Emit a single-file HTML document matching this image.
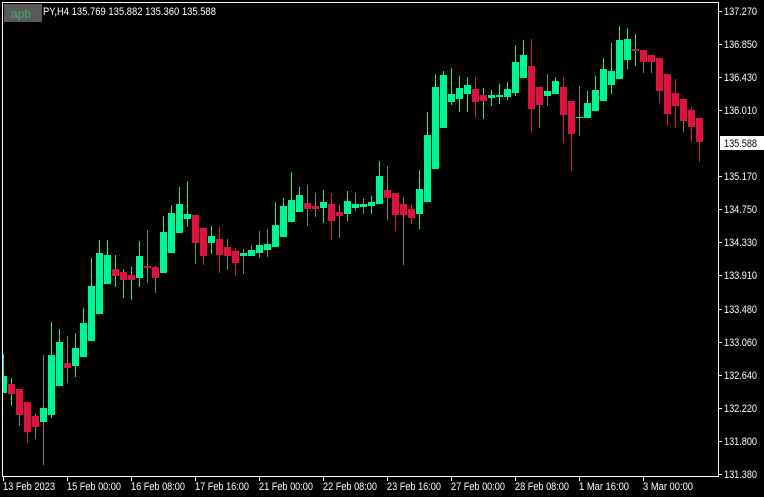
<!DOCTYPE html>
<html><head><meta charset="utf-8"><style>
html,body{margin:0;padding:0;background:#000;width:764px;height:497px;overflow:hidden}
svg{display:block}
text{font-family:"Liberation Sans",sans-serif;font-size:11px;fill:#fff}
</style></head><body>
<svg width="764" height="497" xmlns="http://www.w3.org/2000/svg">
<rect width="764" height="497" fill="#000"/>
<defs><clipPath id="c"><rect x="3" y="3" width="715" height="473"/></clipPath></defs>
<g clip-path="url(#c)">
<rect x="3" y="354" width="1" height="39" fill="#00f593"/><rect x="0" y="376" width="7" height="17" fill="#00f593"/>
<rect x="11" y="378" width="1" height="28" fill="#00f593"/><rect x="8" y="384" width="7" height="10" fill="#dc143c"/>
<rect x="19" y="389" width="1" height="37" fill="#808080"/><rect x="16" y="389" width="7" height="26" fill="#dc143c"/>
<rect x="27" y="402" width="1" height="41" fill="#dc143c"/><rect x="24" y="402" width="7" height="30" fill="#dc143c"/>
<rect x="35" y="414" width="1" height="25" fill="#808080"/><rect x="32" y="416" width="7" height="11" fill="#dc143c"/>
<rect x="43" y="355" width="1" height="110" fill="#808080"/><rect x="40" y="408" width="7" height="14" fill="#00f593"/>
<rect x="51" y="322" width="1" height="96" fill="#00f593"/><rect x="48" y="355" width="7" height="60" fill="#00f593"/>
<rect x="59" y="329" width="1" height="57" fill="#00f593"/><rect x="56" y="342" width="7" height="44" fill="#00f593"/>
<rect x="67" y="336" width="1" height="47" fill="#808080"/><rect x="64" y="363" width="7" height="5" fill="#dc143c"/>
<rect x="75" y="333" width="1" height="44" fill="#00f593"/><rect x="72" y="348" width="7" height="18" fill="#00f593"/>
<rect x="83" y="308" width="1" height="49" fill="#00f593"/><rect x="80" y="323" width="7" height="34" fill="#00f593"/>
<rect x="91" y="258" width="1" height="83" fill="#00f593"/><rect x="88" y="286" width="7" height="55" fill="#00f593"/>
<rect x="99" y="240" width="1" height="74" fill="#00f593"/><rect x="96" y="253" width="7" height="61" fill="#00f593"/>
<rect x="107" y="240" width="1" height="44" fill="#00f593"/><rect x="104" y="255" width="7" height="29" fill="#00f593"/>
<rect x="115" y="255" width="1" height="32" fill="#00f593"/><rect x="112" y="269" width="7" height="7" fill="#dc143c"/>
<rect x="123" y="269" width="1" height="29" fill="#00f593"/><rect x="120" y="272" width="7" height="8" fill="#dc143c"/>
<rect x="131" y="267" width="1" height="33" fill="#00f593"/><rect x="128" y="275" width="7" height="5" fill="#dc143c"/>
<rect x="139" y="241" width="1" height="46" fill="#00f593"/><rect x="136" y="256" width="7" height="22" fill="#00f593"/>
<rect x="147" y="230" width="1" height="53" fill="#808080"/><rect x="144" y="266" width="7" height="2" fill="#dc143c"/>
<rect x="155" y="266" width="1" height="27" fill="#808080"/><rect x="152" y="267" width="7" height="11" fill="#dc143c"/>
<rect x="163" y="216" width="1" height="57" fill="#00f593"/><rect x="160" y="232" width="7" height="41" fill="#00f593"/>
<rect x="171" y="205" width="1" height="48" fill="#00f593"/><rect x="168" y="213" width="7" height="40" fill="#00f593"/>
<rect x="179" y="187" width="1" height="46" fill="#00f593"/><rect x="176" y="204" width="7" height="29" fill="#00f593"/>
<rect x="187" y="181" width="1" height="46" fill="#00f593"/><rect x="184" y="214" width="7" height="5" fill="#00f593"/>
<rect x="195" y="215" width="1" height="49" fill="#808080"/><rect x="192" y="215" width="7" height="28" fill="#dc143c"/>
<rect x="203" y="228" width="1" height="37" fill="#dc143c"/><rect x="200" y="228" width="7" height="28" fill="#dc143c"/>
<rect x="211" y="226" width="1" height="28" fill="#00f593"/><rect x="208" y="236" width="7" height="7" fill="#00f593"/>
<rect x="219" y="226" width="1" height="47" fill="#dc143c"/><rect x="216" y="239" width="7" height="16" fill="#dc143c"/>
<rect x="227" y="239" width="1" height="31" fill="#808080"/><rect x="224" y="247" width="7" height="9" fill="#dc143c"/>
<rect x="235" y="248" width="1" height="28" fill="#dc143c"/><rect x="232" y="251" width="7" height="12" fill="#dc143c"/>
<rect x="243" y="249" width="1" height="25" fill="#808080"/><rect x="240" y="253" width="7" height="3" fill="#00f593"/>
<rect x="251" y="245" width="1" height="11" fill="#808080"/><rect x="248" y="250" width="7" height="6" fill="#00f593"/>
<rect x="259" y="231" width="1" height="27" fill="#808080"/><rect x="256" y="245" width="7" height="8" fill="#00f593"/>
<rect x="267" y="229" width="1" height="28" fill="#808080"/><rect x="264" y="244" width="7" height="6" fill="#00f593"/>
<rect x="275" y="202" width="1" height="45" fill="#00f593"/><rect x="272" y="225" width="7" height="22" fill="#00f593"/>
<rect x="283" y="198" width="1" height="39" fill="#00f593"/><rect x="280" y="206" width="7" height="31" fill="#00f593"/>
<rect x="291" y="172" width="1" height="50" fill="#00f593"/><rect x="288" y="200" width="7" height="22" fill="#00f593"/>
<rect x="299" y="187" width="1" height="25" fill="#00f593"/><rect x="296" y="195" width="7" height="17" fill="#00f593"/>
<rect x="307" y="185" width="1" height="41" fill="#808080"/><rect x="304" y="203" width="7" height="6" fill="#dc143c"/>
<rect x="315" y="193" width="1" height="24" fill="#808080"/><rect x="312" y="206" width="7" height="3" fill="#dc143c"/>
<rect x="323" y="190" width="1" height="33" fill="#00f593"/><rect x="320" y="202" width="7" height="6" fill="#00f593"/>
<rect x="331" y="193" width="1" height="47" fill="#dc143c"/><rect x="328" y="204" width="7" height="17" fill="#dc143c"/>
<rect x="339" y="205" width="1" height="33" fill="#808080"/><rect x="336" y="212" width="7" height="4" fill="#dc143c"/>
<rect x="347" y="191" width="1" height="30" fill="#00f593"/><rect x="344" y="201" width="7" height="13" fill="#00f593"/>
<rect x="355" y="193" width="1" height="18" fill="#808080"/><rect x="352" y="204" width="7" height="4" fill="#00f593"/>
<rect x="363" y="198" width="1" height="16" fill="#808080"/><rect x="360" y="204" width="7" height="3" fill="#00f593"/>
<rect x="371" y="196" width="1" height="18" fill="#00f593"/><rect x="368" y="202" width="7" height="4" fill="#00f593"/>
<rect x="379" y="161" width="1" height="43" fill="#00f593"/><rect x="376" y="176" width="7" height="28" fill="#00f593"/>
<rect x="387" y="166" width="1" height="54" fill="#808080"/><rect x="384" y="190" width="7" height="8" fill="#dc143c"/>
<rect x="395" y="193" width="1" height="38" fill="#dc143c"/><rect x="392" y="193" width="7" height="22" fill="#dc143c"/>
<rect x="403" y="197" width="1" height="68" fill="#808080"/><rect x="400" y="204" width="7" height="11" fill="#dc143c"/>
<rect x="411" y="204" width="1" height="20" fill="#dc143c"/><rect x="408" y="209" width="7" height="9" fill="#dc143c"/>
<rect x="419" y="170" width="1" height="59" fill="#00f593"/><rect x="416" y="189" width="7" height="25" fill="#00f593"/>
<rect x="427" y="112" width="1" height="90" fill="#00f593"/><rect x="424" y="135" width="7" height="67" fill="#00f593"/>
<rect x="435" y="74" width="1" height="95" fill="#00f593"/><rect x="432" y="87" width="7" height="82" fill="#00f593"/>
<rect x="443" y="71" width="1" height="57" fill="#00f593"/><rect x="440" y="75" width="7" height="53" fill="#00f593"/>
<rect x="451" y="68" width="1" height="37" fill="#00f593"/><rect x="448" y="94" width="7" height="8" fill="#00f593"/>
<rect x="459" y="76" width="1" height="36" fill="#00f593"/><rect x="456" y="88" width="7" height="11" fill="#00f593"/>
<rect x="467" y="77" width="1" height="35" fill="#00f593"/><rect x="464" y="85" width="7" height="9" fill="#00f593"/>
<rect x="475" y="77" width="1" height="41" fill="#dc143c"/><rect x="472" y="89" width="7" height="13" fill="#dc143c"/>
<rect x="483" y="88" width="1" height="31" fill="#00f593"/><rect x="480" y="95" width="7" height="6" fill="#dc143c"/>
<rect x="491" y="90" width="1" height="16" fill="#00f593"/><rect x="488" y="95" width="7" height="3" fill="#00f593"/>
<rect x="499" y="84" width="1" height="20" fill="#00f593"/><rect x="496" y="95" width="7" height="2" fill="#00f593"/>
<rect x="507" y="82" width="1" height="18" fill="#00f593"/><rect x="504" y="89" width="7" height="8" fill="#00f593"/>
<rect x="515" y="45" width="1" height="51" fill="#00f593"/><rect x="512" y="62" width="7" height="31" fill="#00f593"/>
<rect x="523" y="40" width="1" height="38" fill="#00f593"/><rect x="520" y="55" width="7" height="23" fill="#00f593"/>
<rect x="531" y="39" width="1" height="94" fill="#dc143c"/><rect x="528" y="66" width="7" height="43" fill="#dc143c"/>
<rect x="539" y="87" width="1" height="41" fill="#808080"/><rect x="536" y="87" width="7" height="18" fill="#dc143c"/>
<rect x="547" y="74" width="1" height="32" fill="#808080"/><rect x="544" y="91" width="7" height="5" fill="#00f593"/>
<rect x="555" y="77" width="1" height="17" fill="#00f593"/><rect x="552" y="81" width="7" height="13" fill="#00f593"/>
<rect x="563" y="77" width="1" height="66" fill="#dc143c"/><rect x="560" y="87" width="7" height="28" fill="#dc143c"/>
<rect x="571" y="101" width="1" height="70" fill="#dc143c"/><rect x="568" y="101" width="7" height="33" fill="#dc143c"/>
<rect x="579" y="86" width="1" height="50" fill="#808080"/><rect x="576" y="117" width="7" height="1" fill="#00f593"/>
<rect x="587" y="91" width="1" height="27" fill="#00f593"/><rect x="584" y="103" width="7" height="15" fill="#00f593"/>
<rect x="595" y="76" width="1" height="35" fill="#00f593"/><rect x="592" y="90" width="7" height="21" fill="#00f593"/>
<rect x="603" y="58" width="1" height="43" fill="#00f593"/><rect x="600" y="69" width="7" height="32" fill="#00f593"/>
<rect x="611" y="43" width="1" height="51" fill="#00f593"/><rect x="608" y="71" width="7" height="14" fill="#00f593"/>
<rect x="619" y="26" width="1" height="53" fill="#00f593"/><rect x="616" y="40" width="7" height="39" fill="#00f593"/>
<rect x="627" y="28" width="1" height="41" fill="#00f593"/><rect x="624" y="39" width="7" height="21" fill="#00f593"/>
<rect x="635" y="34" width="1" height="32" fill="#00f593"/><rect x="632" y="49" width="7" height="2" fill="#dc143c"/>
<rect x="643" y="50" width="1" height="23" fill="#808080"/><rect x="640" y="50" width="7" height="12" fill="#dc143c"/>
<rect x="651" y="55" width="1" height="18" fill="#808080"/><rect x="648" y="55" width="7" height="7" fill="#dc143c"/>
<rect x="659" y="58" width="1" height="45" fill="#dc143c"/><rect x="656" y="58" width="7" height="33" fill="#dc143c"/>
<rect x="667" y="74" width="1" height="52" fill="#dc143c"/><rect x="664" y="74" width="7" height="40" fill="#dc143c"/>
<rect x="675" y="79" width="1" height="49" fill="#dc143c"/><rect x="672" y="93" width="7" height="13" fill="#dc143c"/>
<rect x="683" y="99" width="1" height="33" fill="#808080"/><rect x="680" y="99" width="7" height="22" fill="#dc143c"/>
<rect x="691" y="107" width="1" height="35" fill="#dc143c"/><rect x="688" y="110" width="7" height="17" fill="#dc143c"/>
<rect x="699" y="118" width="1" height="44" fill="#dc143c"/><rect x="696" y="118" width="7" height="24" fill="#dc143c"/>
</g>
<rect x="2" y="2" width="1" height="475" fill="#fff"/>
<rect x="2" y="2" width="717" height="1" fill="#fff"/>
<rect x="718" y="2" width="1" height="475" fill="#fff"/>
<rect x="2" y="476" width="717" height="1" fill="#fff"/>
<rect x="4" y="4" width="38" height="18" fill="#5a5a5a"/>
<text x="11" y="18" style="fill:#3cb371;font-size:12px">apb</text>
<text x="43" y="15" textLength="173" lengthAdjust="spacingAndGlyphs">PY,H4  135.769 135.882 135.360 135.588</text>
<g fill="#fff">
<rect x="718" y="11" width="4" height="1"/><rect x="718" y="44" width="4" height="1"/><rect x="718" y="77" width="4" height="1"/><rect x="718" y="110" width="4" height="1"/><rect x="718" y="176" width="4" height="1"/><rect x="718" y="209" width="4" height="1"/><rect x="718" y="242" width="4" height="1"/><rect x="718" y="275" width="4" height="1"/><rect x="718" y="309" width="4" height="1"/><rect x="718" y="342" width="4" height="1"/><rect x="718" y="375" width="4" height="1"/><rect x="718" y="408" width="4" height="1"/><rect x="718" y="441" width="4" height="1"/><rect x="718" y="474" width="4" height="1"/>
</g>
<g>
<text x="724" y="15" textLength="33" lengthAdjust="spacingAndGlyphs">137.270</text>
<text x="724" y="48" textLength="33" lengthAdjust="spacingAndGlyphs">136.850</text>
<text x="724" y="81" textLength="33" lengthAdjust="spacingAndGlyphs">136.430</text>
<text x="724" y="114" textLength="33" lengthAdjust="spacingAndGlyphs">136.010</text>
<rect x="720" y="136" width="44" height="14" fill="#fff"/>
<text x="724" y="147" style="fill:#000" textLength="33" lengthAdjust="spacingAndGlyphs">135.588</text>
<text x="724" y="180" textLength="33" lengthAdjust="spacingAndGlyphs">135.170</text>
<text x="724" y="213" textLength="33" lengthAdjust="spacingAndGlyphs">134.750</text>
<text x="724" y="246" textLength="33" lengthAdjust="spacingAndGlyphs">134.330</text>
<text x="724" y="279" textLength="33" lengthAdjust="spacingAndGlyphs">133.910</text>
<text x="724" y="313" textLength="33" lengthAdjust="spacingAndGlyphs">133.480</text>
<text x="724" y="346" textLength="33" lengthAdjust="spacingAndGlyphs">133.060</text>
<text x="724" y="379" textLength="33" lengthAdjust="spacingAndGlyphs">132.640</text>
<text x="724" y="412" textLength="33" lengthAdjust="spacingAndGlyphs">132.220</text>
<text x="724" y="445" textLength="33" lengthAdjust="spacingAndGlyphs">131.800</text>
<text x="724" y="478" textLength="33" lengthAdjust="spacingAndGlyphs">131.380</text>
</g>
<g fill="#fff">
<rect x="3" y="477" width="1" height="4"/><rect x="67" y="477" width="1" height="4"/><rect x="131" y="477" width="1" height="4"/><rect x="195" y="477" width="1" height="4"/><rect x="259" y="477" width="1" height="4"/><rect x="323" y="477" width="1" height="4"/><rect x="387" y="477" width="1" height="4"/><rect x="451" y="477" width="1" height="4"/><rect x="515" y="477" width="1" height="4"/><rect x="579" y="477" width="1" height="4"/><rect x="643" y="477" width="1" height="4"/>
</g>
<text x="3" y="490" textLength="52" lengthAdjust="spacingAndGlyphs">13 Feb 2023</text>
<text x="67" y="490" textLength="54" lengthAdjust="spacingAndGlyphs">15 Feb 00:00</text>
<text x="131" y="490" textLength="54" lengthAdjust="spacingAndGlyphs">16 Feb 08:00</text>
<text x="195" y="490" textLength="54" lengthAdjust="spacingAndGlyphs">17 Feb 16:00</text>
<text x="259" y="490" textLength="54" lengthAdjust="spacingAndGlyphs">21 Feb 00:00</text>
<text x="323" y="490" textLength="54" lengthAdjust="spacingAndGlyphs">22 Feb 08:00</text>
<text x="387" y="490" textLength="54" lengthAdjust="spacingAndGlyphs">23 Feb 16:00</text>
<text x="451" y="490" textLength="54" lengthAdjust="spacingAndGlyphs">27 Feb 00:00</text>
<text x="515" y="490" textLength="54" lengthAdjust="spacingAndGlyphs">28 Feb 08:00</text>
<text x="579" y="490" textLength="50" lengthAdjust="spacingAndGlyphs">1 Mar 16:00</text>
<text x="643" y="490" textLength="50" lengthAdjust="spacingAndGlyphs">3 Mar 00:00</text>
</svg>
</body></html>
